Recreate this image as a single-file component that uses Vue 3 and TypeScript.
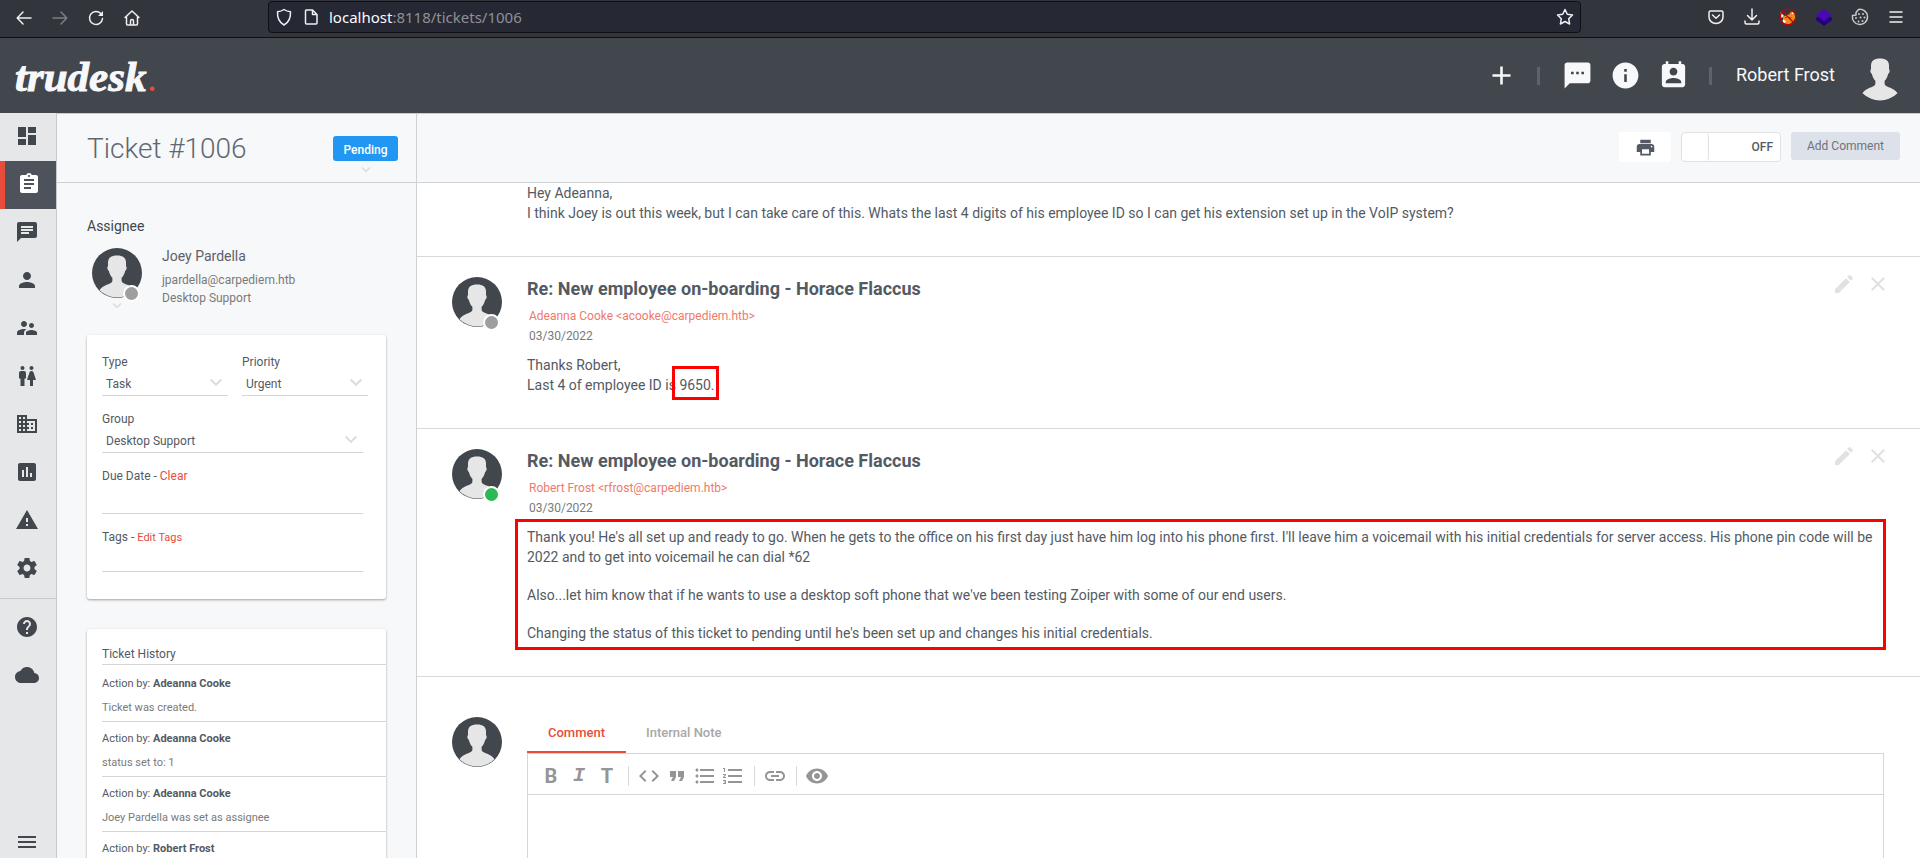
<script setup lang="ts">
import { h, ref } from 'vue'

const icons: Record<string, string> = {
  dashboard: 'M3 13h8V3H3v10zm0 8h8v-6H3v6zm10 0h8V11h-8v10zm0-18v6h8V3h-8z',
  assignment: 'M19 3h-4.18C14.4 1.84 13.3 1 12 1c-1.3 0-2.4.84-2.82 2H5c-1.1 0-2 .9-2 2v14c0 1.1.9 2 2 2h14c1.1 0 2-.9 2-2V5c0-1.1-.9-2-2-2zm-7 0c.55 0 1 .45 1 1s-.45 1-1 1-1-.45-1-1 .45-1 1-1zm2 14H7v-2h7v2zm3-4H7v-2h10v2zm0-4H7V7h10v2z',
  chat: 'M20 2H4c-1.1 0-1.99.9-1.99 2L2 22l4-4h14c1.1 0 2-.9 2-2V4c0-1.1-.9-2-2-2zM6 9h12v2H6V9zm8 5H6v-2h8v2zm4-6H6V6h12v2z',
  person: 'M12 12c2.21 0 4-1.79 4-4s-1.79-4-4-4-4 1.79-4 4 1.79 4 4 4zm0 2c-2.67 0-8 1.34-8 4v2h16v-2c0-2.66-5.33-4-8-4z',
  group: 'M16.5 12c1.38 0 2.49-1.12 2.49-2.5S17.88 7 16.5 7C15.12 7 14 8.12 14 9.5s1.12 2.5 2.5 2.5zM9 11c1.66 0 2.99-1.34 2.99-3S10.66 5 9 5C7.34 5 6 6.34 6 8s1.34 3 3 3zm7.5 3c-1.83 0-5.5.92-5.5 2.75V19h11v-2.25c0-1.83-3.67-2.75-5.5-2.75zM9 13c-2.33 0-7 1.17-7 3.5V19h7v-2.25c0-.85.33-2.34 2.37-3.47C10.5 13.1 9.66 13 9 13z',
  wc: 'M5.5 22v-7.5H4V9c0-1.1.9-2 2-2h3c1.1 0 2 .9 2 2v5.5H9.5V22h-4zM18 22v-6h3l-2.54-7.63C18.18 7.55 17.42 7 16.56 7h-.12c-.86 0-1.63.55-1.9 1.37L12 16h3v6h3zM7.5 6c1.11 0 2-.89 2-2s-.89-2-2-2-2 .89-2 2 .89 2 2 2zm9 0c1.11 0 2-.89 2-2s-.89-2-2-2-2 .89-2 2 .89 2 2 2z',
  domain: 'M12 7V3H2v18h20V7H12zM6 19H4v-2h2v2zm0-4H4v-2h2v2zm0-4H4V9h2v2zm0-4H4V5h2v2zm4 12H8v-2h2v2zm0-4H8v-2h2v2zm0-4H8V9h2v2zm0-4H8V5h2v2zm10 12h-8v-2h2v-2h-2v-2h2v-2h-2V9h8v10zm-2-8h-2v2h2v-2zm0 4h-2v2h2v-2z',
  assessment: 'M19 3H5c-1.1 0-2 .9-2 2v14c0 1.1.9 2 2 2h14c1.1 0 2-.9 2-2V5c0-1.1-.9-2-2-2zM9 17H7v-7h2v7zm4 0h-2V7h2v10zm4 0h-2v-4h2v4z',
  warning: 'M1 21h22L12 2 1 21zm12-3h-2v-2h2v2zm0-4h-2v-4h2v4z',
  settings: 'M19.43 12.98c.04-.32.07-.64.07-.98s-.03-.66-.07-.98l2.11-1.65c.19-.15.24-.42.12-.64l-2-3.46c-.12-.22-.39-.3-.61-.22l-2.49 1c-.52-.4-1.08-.73-1.69-.98l-.38-2.65C14.46 2.18 14.25 2 14 2h-4c-.25 0-.46.18-.49.42l-.38 2.65c-.61.25-1.17.59-1.69.98l-2.49-1c-.23-.09-.49 0-.61.22l-2 3.46c-.13.22-.07.49.12.64l2.11 1.65c-.04.32-.07.65-.07.98s.03.66.07.98l-2.11 1.65c-.19.15-.24.42-.12.64l2 3.46c.12.22.39.3.61.22l2.49-1c.52.4 1.08.73 1.69.98l.38 2.65c.03.24.24.42.49.42h4c.25 0 .46-.18.49-.42l.38-2.65c.61-.25 1.17-.59 1.69-.98l2.49 1c.23.09.49 0 .61-.22l2-3.46c.12-.22.07-.49-.12-.64l-2.11-1.65zM12 15.5c-1.93 0-3.5-1.57-3.5-3.5s1.57-3.5 3.5-3.5 3.5 1.57 3.5 3.5-1.57 3.5-3.5 3.5z',
  help: 'M12 2C6.48 2 2 6.48 2 12s4.48 10 10 10 10-4.48 10-10S17.52 2 12 2zm1 17h-2v-2h2v2zm2.07-7.75l-.9.92C13.45 12.9 13 13.5 13 15h-2v-.5c0-1.1.45-2.1 1.17-2.83l1.24-1.26c.37-.36.59-.86.59-1.41 0-1.1-.9-2-2-2s-2 .9-2 2H8c0-2.21 1.79-4 4-4s4 1.79 4 4c0 .88-.36 1.68-.93 2.25z',
  cloud: 'M19.35 10.04C18.67 6.59 15.64 4 12 4 9.11 4 6.6 5.64 5.35 8.04 2.34 8.36 0 10.91 0 14c0 3.31 2.69 6 6 6h13c2.76 0 5-2.24 5-5 0-2.64-2.05-4.78-4.65-4.96z',
  menu: 'M3 18h18v-2H3v2zm0-5h18v-2H3v2zm0-7v2h18V6H3z',
  add: 'M19 13h-6v6h-2v-6H5v-2h6V5h2v6h6v2z',
  sms: 'M20 2H4c-1.1 0-1.99.9-1.99 2L2 22l4-4h14c1.1 0 2-.9 2-2V4c0-1.1-.9-2-2-2zM9 11H7V9h2v2zm4 0h-2V9h2v2zm4 0h-2V9h2v2z',
  info: 'M12 2C6.48 2 2 6.48 2 12s4.48 10 10 10 10-4.48 10-10S17.52 2 12 2zm1 15h-2v-6h2v6zm0-8h-2V7h2v2z',
  contact: 'M19 3h-1V1h-2v2H8V1H6v2H5c-1.11 0-2 .9-2 2v14c0 1.1.89 2 2 2h14c1.1 0 2-.9 2-2V5c0-1.1-.9-2-2-2zm-7 3c1.66 0 3 1.34 3 3s-1.34 3-3 3-3-1.34-3-3 1.34-3 3-3zm6 12H6v-1c0-2 4-3.1 6-3.1s6 1.1 6 3.1v1z',
  print: 'M19 8H5c-1.66 0-3 1.34-3 3v6h4v4h12v-4h4v-6c0-1.66-1.34-3-3-3zm-3 11H8v-5h8v5zm3-7c-.55 0-1-.45-1-1s.45-1 1-1 1 .45 1 1-.45 1-1 1zm-1-9H6v4h12V3z',
  edit: 'M3 17.25V21h3.75L17.81 9.94l-3.75-3.75L3 17.25zM20.71 7.04c.39-.39.39-1.02 0-1.41l-2.34-2.34c-.39-.39-1.02-.39-1.41 0l-1.83 1.83 3.75 3.75 1.83-1.83z',
  close: 'M19 6.41L17.59 5 12 10.59 6.41 5 5 6.41 10.59 12 5 17.59 6.41 19 12 13.41 17.59 19 19 17.59 13.41 12z',
  code: 'M9.4 16.6L4.8 12l4.6-4.6L8 6l-6 6 6 6 1.4-1.4zm5.2 0l4.6-4.6-4.6-4.6L16 6l6 6-6 6-1.4-1.4z',
  quote: 'M6 17h3l2-4V7H5v6h3zm8 0h3l2-4V7h-6v6h3z',
  bullets: 'M4 10.5c-.83 0-1.5.67-1.5 1.5s.67 1.5 1.5 1.5 1.5-.67 1.5-1.5-.67-1.5-1.5-1.5zm0-6c-.83 0-1.5.67-1.5 1.5S3.17 7.5 4 7.5 5.5 6.83 5.5 6 4.83 4.5 4 4.5zm0 12c-.83 0-1.5.68-1.5 1.5s.68 1.5 1.5 1.5 1.5-.68 1.5-1.5-.67-1.5-1.5-1.5zM7 19h14v-2H7v2zm0-6h14v-2H7v2zm0-8v2h14V5H7z',
  numbers: 'M2 17h2v.5H3v1h1v.5H2v1h3v-4H2v1zm1-9h1V4H2v1h1v3zm-1 3h1.8L2 13.1v.9h3v-1H3.2L5 10.9V10H2v1zm5-6v2h14V5H7zm0 14h14v-2H7v2zm0-6h14v-2H7v2z',
  link: 'M3.9 12c0-1.71 1.39-3.1 3.1-3.1h4V7H7c-2.76 0-5 2.24-5 5s2.24 5 5 5h4v-1.9H7c-1.71 0-3.1-1.39-3.1-3.1zM8 13h8v-2H8v2zm9-6h-4v1.9h4c1.71 0 3.1 1.39 3.1 3.1s-1.39 3.1-3.1 3.1h-4V17h4c2.76 0 5-2.24 5-5s-2.24-5-5-5z',
  eye: 'M12 4.5C7 4.5 2.73 7.61 1 12c1.73 4.39 6 7.5 11 7.5s9.27-3.11 11-7.5c-1.73-4.39-6-7.5-11-7.5zM12 17c-2.76 0-5-2.24-5-5s2.24-5 5-5 5 2.24 5 5-2.24 5-5 5zm0-8c-1.66 0-3 1.34-3 3s1.34 3 3 3 3-1.34 3-3-1.34-3-3-3z',
  chevron: 'M7.41 7.84L12 12.42l4.59-4.58L18 9.25l-6 6-6-6z'
}

const Icon = (props: { name: string; size?: number }) =>
  h(
    'svg',
    { viewBox: '0 0 24 24', width: props.size ?? 24, height: props.size ?? 24, fill: 'currentColor', 'aria-hidden': 'true' },
    [h('path', { d: icons[props.name] })]
  )
Icon.props = ['name', 'size']

const Avatar = () =>
  h('svg', { viewBox: '0 0 50 50', width: 50, height: 50, 'aria-hidden': 'true' }, [
    h('circle', { cx: 25, cy: 25, r: 25, fill: '#42464d' }),
    h('path', {
      fill: '#e6e6e6',
      d: 'M25 7.5c-6 0-9 2.500-9 7v3.800c-.9.400-.8 2.500-.1 3.700.3.500.8.600 1 1.100.6 2.700 1.700 5.200 3.500 6.700v2.700c0 1.600-1 2.200-2.600 2.900-4.200 1.800-8.200 3.100-10.300 6.900A25 25 0 0 0 42.500 42.300c-2.100-3.800-6.100-5.100-10.300-6.900-1.600-.7-2.600-1.300-2.600-2.900v-2.700c1.800-1.500 2.900-4 3.500-6.700.2-.5.7-.6 1-1.100.7-1.200.8-3.300-.1-3.700V14.500c0-4.500-3-7-9-7z'
    })
  ])

const nav = [
  { icon: 'dashboard', label: 'Dashboard' },
  { icon: 'assignment', label: 'Tickets', active: true },
  { icon: 'chat', label: 'Messages' },
  { icon: 'person', label: 'Accounts' },
  { icon: 'group', label: 'Groups' },
  { icon: 'wc', label: 'Teams' },
  { icon: 'domain', label: 'Departments' },
  { icon: 'assessment', label: 'Reports' },
  { icon: 'warning', label: 'Notices' },
  { icon: 'settings', label: 'Settings' }
]
const navExtra = [
  { icon: 'help', label: 'Help' },
  { icon: 'cloud', label: 'Cloud' }
]

const history: { by: string; text?: string }[] = [
  { by: 'Adeanna Cooke', text: 'Ticket was created.' },
  { by: 'Adeanna Cooke', text: 'status set to: 1' },
  { by: 'Adeanna Cooke', text: 'Joey Pardella was set as assignee' },
  { by: 'Robert Frost' }
]

interface Comment {
  author: string
  online: boolean
  boxed: boolean
  paragraphs: { lines: string[]; mark?: string }[]
}
const subject = 'Re: New employee on-boarding - Horace Flaccus'
const comments: Comment[] = [
  {
    author: 'Adeanna Cooke <acooke@carpediem.htb>',
    online: false,
    boxed: false,
    paragraphs: [{ lines: ['Thanks Robert,', 'Last 4 of employee ID is '], mark: '9650.' }]
  },
  {
    author: 'Robert Frost <rfrost@carpediem.htb>',
    online: true,
    boxed: true,
    paragraphs: [
      { lines: ["Thank you! He's all set up and ready to go. When he gets to the office on his first day just have him log into his phone first. I'll leave him a voicemail with his initial credentials for server access. His phone pin code will be 2022 and to get into voicemail he can dial *62"] },
      { lines: ["Also...let him know that if he wants to use a desktop soft phone that we've been testing Zoiper with some of our end users."] },
      { lines: ["Changing the status of this ticket to pending until he's been set up and changes his initial credentials."] }
    ]
  }
]

const tools = [
  [{ icon: 'code', label: 'Code' }, { icon: 'quote', label: 'Quote' }, { icon: 'bullets', label: 'Bulleted list' }, { icon: 'numbers', label: 'Numbered list' }],
  [{ icon: 'link', label: 'Link' }],
  [{ icon: 'eye', label: 'Preview' }]
]

const type = ref('Task')
const priority = ref('Urgent')
const group = ref('Desktop Support')
const dueDate = ref('')
const tags = ref('')
const reply = ref('')
const enabled = ref(false)
</script>

<template>
  <div class="screen">
    <div class="browser">
      <div class="browser-nav">
        <button type="button" aria-label="Back"><svg viewBox="0 0 18 18" class="line"><path d="M16 9H2.500M8 3L2.200 9l5.800 6" /></svg></button>
        <button type="button" aria-label="Forward" class="dim"><svg viewBox="0 0 18 18" class="line"><path d="M2 9h13.500M10 3l5.800 6-5.800 6" /></svg></button>
        <button type="button" aria-label="Reload"><svg viewBox="0 0 18 18" class="line"><path d="M15.500 9.500A6.500 6.500 0 1 1 13.800 4.600L15 6" /><path d="M16 2v5h-5z" class="solid" /></svg></button>
        <button type="button" aria-label="Home"><svg viewBox="0 0 18 18" class="line"><path d="M2 8.500L9 2l7 6.500M3.500 7.500V15a1 1 0 0 0 1 1h9a1 1 0 0 0 1-1V7.500M7.500 16v-4a1.500 1.500 0 0 1 3 0v4" /></svg></button>
      </div>
      <div class="address">
        <svg viewBox="0 0 18 18" class="line"><path d="M9 1.500c2 1.500 4 2 6.500 2.200C15.800 9.500 14.500 14 9 17 3.500 14 2.200 9.500 2.500 3.700 5 3.500 7 3 9 1.500z" /></svg>
        <svg viewBox="0 0 18 18" class="line"><path d="M4 2h6.500L15 6.500V15a1 1 0 0 1-1 1H4.500a1 1 0 0 1-1-1V3a1 1 0 0 1 1-1zM10.500 2v4.500H15" /></svg>
        <span class="url"><b>localhost</b>:8118/tickets/1006</span>
        <svg viewBox="0 0 18 18" class="line"><path d="M9 1.500l2.300 4.800 5.200.7-3.800 3.700.9 5.300L9 13.500 4.400 16l.9-5.300L1.500 7l5.200-.7z" /></svg>
      </div>
      <div class="browser-tools">
        <svg viewBox="0 0 18 18" class="line"><path d="M3.500 3h11A1.500 1.500 0 0 1 16 4.500V9a7 6.500 0 0 1-14 0V4.500A1.500 1.500 0 0 1 3.500 3zM5.500 7L9 10.200 12.500 7" /></svg>
        <svg viewBox="0 0 18 18" class="line"><path d="M9 1v10.500M4.500 7.500L9 12l4.500-4.500M2 13v1.500A1.500 1.500 0 0 0 3.500 16h11a1.500 1.500 0 0 0 1.500-1.500V13" /></svg>
        <svg viewBox="0 0 18 18">
          <path d="M4 9l3-2 3-.5 2-3 2 1 2 1v5l-2 3-3 2.500-4 .5-3-2z" fill="#ee8b1d" />
          <path d="M1.500 4l3.500 4-2.500 2zM4 11.500l3 1.500-1.500 2.500L3.500 14zM13 4l2 1-1.500 1.500z" fill="#fff" />
          <path d="M10 9l3 .5-2 2zM6 9h2v1H6z" fill="#a04f08" />
          <circle cx="9" cy="9" r="7.800" fill="none" stroke="#c40000" stroke-width="1.200" />
          <path d="M3.500 3.500l11 11" stroke="#c40000" stroke-width="1.200" />
        </svg>
        <svg viewBox="0 0 18 18"><path d="M1 10l8-5 8 5v2l-8 6-8-6z" fill="#250080" /><path d="M9 1l8 6-8 6-8-6z" fill="#4b08b5" /></svg>
        <svg viewBox="0 0 18 18" class="cookie">
          <path d="M7.500 1.500a7.600 7.600 0 1 1-6 6L5 7V4.500z" />
          <circle cx="8" cy="6" r="1" class="dots" /><circle cx="12" cy="6" r="1" class="dots" />
          <circle cx="5" cy="10" r="1" class="dots" /><circle cx="9.500" cy="9.500" r="1" class="dots" />
          <circle cx="13.500" cy="9.500" r="1" class="dots" /><circle cx="7.500" cy="13.500" r="1" class="dots" />
          <circle cx="11.500" cy="13" r="1" class="dots" />
        </svg>
        <svg viewBox="0 0 18 18" class="line"><path d="M3 4h12M3 9h12M3 14h12" /></svg>
      </div>
    </div>

    <header class="topbar">
      <a href="#" class="logo">trudesk<span>.</span></a>
      <div class="top-actions">
        <button type="button" aria-label="New ticket"><Icon name="add" :size="31" /></button>
        <i class="bar"></i>
        <button type="button" aria-label="Conversations" class="chat"><Icon name="sms" :size="31" /></button>
        <button type="button" aria-label="Notices"><Icon name="info" :size="31" /></button>
        <button type="button" aria-label="Online users"><Icon name="contact" :size="31" /></button>
        <i class="bar"></i>
        <span class="user">Robert Frost</span>
        <Avatar />
      </div>
    </header>

    <div class="body">
      <nav class="sidebar">
        <a v-for="n in nav" :key="n.icon" href="#" :aria-label="n.label" :class="{ active: n.active }"><Icon :name="n.icon" /></a>
        <hr />
        <a v-for="n in navExtra" :key="n.icon" href="#" :aria-label="n.label"><Icon :name="n.icon" /></a>
        <button type="button" aria-label="Expand menu" class="expand"><Icon name="menu" /></button>
      </nav>

      <aside class="panel">
        <div class="panel-head">
          <h1>Ticket #1006</h1>
          <button type="button" class="status">Pending<Icon name="chevron" :size="18" class="drop" /></button>
        </div>
        <div class="panel-body">
          <h2>Assignee</h2>
          <div class="assignee">
            <button type="button" class="pic" aria-label="Change assignee"><Avatar /><i class="dot"></i><Icon name="chevron" :size="18" class="drop" /></button>
            <div>
              <strong>Joey Pardella</strong>
              <span>jpardella@carpediem.htb</span>
              <span>Desktop Support</span>
            </div>
          </div>

          <section class="card details">
            <div class="pair">
              <div class="field">
                <label for="type">Type</label>
                <div class="select"><select id="type" v-model="type"><option>Task</option><option>Issue</option></select><Icon name="chevron" /></div>
              </div>
              <div class="field">
                <label for="priority">Priority</label>
                <div class="select"><select id="priority" v-model="priority"><option>Urgent</option><option>Normal</option></select><Icon name="chevron" /></div>
              </div>
            </div>
            <div class="field wide">
              <label for="group">Group</label>
              <div class="select"><select id="group" v-model="group"><option>Desktop Support</option></select><Icon name="chevron" /></div>
            </div>
            <div class="field wide">
              <div><label for="due">Due Date</label> - <a href="#">Clear</a></div>
              <input id="due" v-model="dueDate" type="text" />
            </div>
            <div class="field wide">
              <div><label for="tags">Tags</label> - <a href="#" class="small">Edit Tags</a></div>
              <input id="tags" v-model="tags" type="text" class="tags" />
            </div>
          </section>

          <section class="card history">
            <h3>Ticket History</h3>
            <div v-for="(e, i) in history" :key="i" class="event">
              <p>Action by: <b>{{ e.by }}</b></p>
              <p v-if="e.text" class="what">{{ e.text }}</p>
            </div>
          </section>
        </div>
      </aside>

      <main class="main">
        <div class="main-head">
          <button type="button" class="print" aria-label="Print"><Icon name="print" :size="21" /></button>
          <label class="toggle"><input v-model="enabled" type="checkbox" role="switch" /><i></i><span>OFF</span></label>
          <button type="button" class="add">Add Comment</button>
        </div>

        <div class="thread">
          <article class="comment first">
            <div class="message">
              <p>Hey Adeanna,<br />I think Joey is out this week, but I can take care of this. Whats the last 4 digits of his employee ID so I can get his extension set up in the VoIP system?</p>
            </div>
          </article>

          <article v-for="c in comments" :key="c.author" class="comment">
            <div class="pic"><Avatar /><i class="dot" :class="{ online: c.online }"></i></div>
            <div class="content">
              <h2>{{ subject }}</h2>
              <a href="#" class="author">{{ c.author }}</a>
              <time datetime="2022-03-30">03/30/2022</time>
              <div class="message" :class="{ boxed: c.boxed }">
                <p v-for="(p, i) in c.paragraphs" :key="i">
                  <template v-for="(l, j) in p.lines" :key="j"><br v-if="j" />{{ l }}</template><mark v-if="p.mark">{{ p.mark }}</mark>
                </p>
              </div>
            </div>
            <div class="actions">
              <button type="button" aria-label="Edit comment"><Icon name="edit" /></button>
              <button type="button" aria-label="Delete comment"><Icon name="close" /></button>
            </div>
          </article>

          <section class="reply">
            <Avatar />
            <div class="composer">
              <div class="tabs" role="tablist">
                <button type="button" role="tab" aria-selected="true" class="current">Comment</button>
                <button type="button" role="tab" aria-selected="false">Internal Note</button>
              </div>
              <div class="editor">
                <div class="toolbar">
                  <button type="button" class="glyph" aria-label="Bold">B</button>
                  <button type="button" class="glyph slant" aria-label="Italic">I</button>
                  <button type="button" class="glyph" aria-label="Heading">T</button>
                  <template v-for="(set, i) in tools" :key="i">
                    <i class="sep"></i>
                    <button v-for="t in set" :key="t.icon" type="button" :aria-label="t.label"><Icon :name="t.icon" /></button>
                  </template>
                </div>
                <textarea v-model="reply" aria-label="Comment"></textarea>
              </div>
            </div>
          </section>
        </div>
      </main>
    </div>
  </div>
</template>

<style>
body {
  margin: 0;
  overflow: hidden;
}
</style>

<style scoped>
.screen {
  display: flex;
  flex-direction: column;
  height: 100vh;
  overflow: hidden;
  font-family: Roboto, 'Liberation Sans', sans-serif;
  font-size: 14px;
  line-height: 20px;
  color: #545a63;
  background: #fff;
}
.screen * {
  box-sizing: border-box;
}
button {
  padding: 0;
  border: 0;
  background: none;
  font: inherit;
  color: inherit;
}
a {
  color: #e74c3c;
  text-decoration: none;
}
h1,
h2,
h3,
p {
  margin: 0;
  font-weight: 400;
}
svg {
  display: block;
  flex: none;
}

.browser {
  display: flex;
  flex: none;
  align-items: flex-start;
  height: 38px;
  background: #33353c;
  border-bottom: 1px solid #0e0f12;
  color: #f0f0f3;
}
.browser svg {
  width: 18px;
  height: 18px;
}
.line,
.cookie {
  fill: none;
  stroke: currentColor;
  stroke-width: 1.500;
  stroke-linecap: round;
  stroke-linejoin: round;
}
.cookie {
  color: #c9cacd;
}
.solid,
.dots {
  fill: currentColor;
  stroke: none;
}
.dim {
  color: #7d7e83;
}
.browser-nav {
  display: flex;
  gap: 18px;
  padding: 9px 127px 0 15px;
}
.address {
  display: flex;
  flex: 1;
  align-items: center;
  gap: 9px;
  height: 32px;
  margin-top: 1px;
  padding: 0 6px;
  border: 1px solid #0f1015;
  border-radius: 4px;
  background: #262833;
}
.url {
  flex: 1;
  font-family: 'Noto Sans', sans-serif;
  font-size: 15px;
  color: #8f9096;
}
.url b {
  font-weight: 400;
  color: #fbfbfe;
}
.browser-tools {
  display: flex;
  gap: 18px;
  padding: 8px 15px 0 126px;
}

.topbar {
  display: flex;
  flex: none;
  align-items: center;
  justify-content: space-between;
  height: 75px;
  padding: 0 15px;
  background: #42464d;
  color: #f7f8fa;
}
.logo {
  padding-top: 8px;
  font: italic 700 43px/48px 'Liberation Serif', serif;
  color: #f7f8fa;
  -webkit-text-stroke: 1px currentColor;
}
.logo span {
  margin-left: 3px;
  font-size: 28px;
  color: #e74c3c;
  -webkit-text-stroke: 0;
}
.top-actions {
  display: flex;
  align-items: center;
}
.top-actions button {
  width: 48px;
  display: flex;
  justify-content: center;
}
.top-actions .chat {
  margin-left: 13px;
}
.bar {
  width: 3px;
  height: 18px;
  margin-left: 12px;
  background: #5d636e;
}
.top-actions .bar + .user {
  margin-left: 24px;
}
.user {
  margin-right: 20px;
  padding-bottom: 2px;
  font-size: 18px;
}

.body {
  display: flex;
  flex: 1;
  min-height: 0;
}
.sidebar {
  display: flex;
  flex: none;
  flex-direction: column;
  width: 57px;
  border-right: 1px solid #c9cacd;
  background: #e6e7e9;
  color: #42464d;
}
.sidebar a,
.expand {
  display: flex;
  flex: none;
  align-items: center;
  height: 48px;
  padding: 0 0 2px 15px;
  color: #42464d;
}
.sidebar .active {
  padding-left: 12px;
  border-left: 5px solid #e74c3c;
  background: #4d525b;
  color: #fff;
}
.sidebar hr {
  width: 100%;
  margin: 5px 0;
  border: 0;
  border-top: 1px solid #c9cacd;
}
.sidebar .expand {
  height: 30px;
  margin-top: auto;
}

.panel {
  display: flex;
  flex: none;
  flex-direction: column;
  width: 360px;
  border-top: 1px solid #c9cacd;
  border-right: 1px solid #d0d1d4;
  background: #f7f8fa;
}
.panel-head {
  display: flex;
  flex: none;
  align-items: flex-start;
  justify-content: space-between;
  height: 69px;
  padding: 17px 18px 0 30px;
  border-bottom: 1px solid #d0d1d4;
}
.panel-head h1 {
  font-size: 28px;
  font-weight: 300;
  line-height: 36px;
  color: #62676f;
}
.status {
  position: relative;
  width: 65px;
  height: 25px;
  margin-top: 5px;
  padding-top: 2px;
  border-radius: 3px;
  background: #2196f3;
  font-size: 12px;
  font-weight: 500;
  color: #fff;
}
.drop {
  position: absolute;
  top: 25px;
  left: 50%;
  margin-left: -9px;
  color: #d9dde4;
}
.panel-body {
  flex: 1;
  min-height: 0;
  padding: 33px 30px 0;
  overflow: hidden;
}
.panel-body h2 {
  font-size: 14px;
  color: #42464d;
}
.assignee {
  display: flex;
  gap: 20px;
  height: 89px;
  margin-top: 10px;
  padding-left: 5px;
  font-size: 12px;
  line-height: 18px;
  color: #7a7a7a;
}
.assignee strong,
.assignee span {
  display: block;
}
.assignee strong {
  margin-bottom: 5px;
  font-size: 14px;
  font-weight: 400;
  line-height: 20px;
  color: #5c616a;
}
.pic {
  position: relative;
  flex: none;
  width: 50px;
  height: 50px;
}
.assignee .pic {
  margin-top: 2px;
}
.pic .drop {
  top: 49px;
}
.dot {
  position: absolute;
  right: 2px;
  bottom: -4px;
  width: 17px;
  height: 17px;
  border: 2px solid #fff;
  border-radius: 50%;
  background: #9e9e9e;
}
.dot.online {
  background: #2bb956;
}
.card {
  border-radius: 3px;
  background: #fff;
  box-shadow: 0 1px 3px rgba(0, 0, 0, 0.2), 0 1px 2px rgba(0, 0, 0, 0.18);
}
.details {
  display: flex;
  flex-direction: column;
  gap: 14px;
  padding: 18px 18px 27px 15px;
  font-size: 12px;
  line-height: 18px;
}
.pair {
  display: grid;
  grid-template-columns: 1fr 1fr;
  gap: 14px;
}
.field label {
  display: inline-block;
}
.field.wide {
  margin-right: 5px;
}
.small {
  font-size: 11px;
}
.select {
  position: relative;
  height: 25px;
  border-bottom: 1px solid #d6d6d6;
}
.select select {
  width: 100%;
  height: 24px;
  padding: 2px 4px 0;
  border: 0;
  appearance: none;
  background: none;
  font: inherit;
  color: inherit;
}
.select svg {
  position: absolute;
  top: 0;
  right: 0;
  color: #dcdcdc;
  pointer-events: none;
}
.field input {
  display: block;
  width: 100%;
  height: 29px;
  padding: 0 4px;
  border: 0;
  border-bottom: 1px solid #d6d6d6;
  background: none;
  font: inherit;
}
.field .tags {
  height: 25px;
}
.history {
  margin-top: 30px;
  padding: 16px 0 0 15px;
  font-size: 11px;
  line-height: 18px;
}
.history h3 {
  margin-bottom: 2px;
  padding-bottom: 1px;
  border-bottom: 1px solid #d6d6d6;
  font-size: 12px;
}
.event {
  height: 55px;
  padding-top: 8px;
  border-bottom: 1px solid #d6d6d6;
}
.what {
  margin-top: 6px;
  color: #7a7a7a;
}

.main {
  display: flex;
  flex: 1;
  flex-direction: column;
  min-width: 0;
  border-top: 1px solid #c9cacd;
}
.main-head {
  display: flex;
  flex: none;
  gap: 10px;
  justify-content: flex-end;
  height: 69px;
  padding: 18px 20px 0;
  border-bottom: 1px solid #d0d1d4;
  background: #f7f8fa;
  font-size: 12px;
}
.print {
  display: flex;
  align-items: center;
  justify-content: center;
  width: 52px;
  height: 30px;
  border-radius: 3px;
  background: #fff;
}
.toggle {
  display: flex;
  align-items: center;
  justify-content: space-between;
  width: 100px;
  height: 30px;
  padding-right: 7px;
  border: 1px solid #e0e1e3;
  border-radius: 4px;
  background: #fff;
  font-weight: 500;
}
.toggle input {
  position: absolute;
  opacity: 0;
}
.toggle i {
  width: 27px;
  height: 28px;
  border-right: 1px solid #e0e1e3;
  border-radius: 4px;
}
.add {
  width: 109px;
  height: 28px;
  border-radius: 3px;
  background: #dde1e9;
  color: #6d727b;
}
.thread {
  flex: 1;
  min-height: 0;
  overflow: hidden;
}
.comment {
  display: flex;
  gap: 25px;
  padding: 20px 30px 33px 35px;
  border-top: 1px solid #d9d9d9;
}
.comment.first {
  padding: 0 36px 33px 110px;
  border-top: 0;
}
.content {
  flex: 1;
  min-width: 0;
  margin-right: -77px;
}
.content h2 {
  margin-bottom: 5px;
  font-size: 18px;
  font-weight: 700;
  line-height: 24px;
}
.author,
.content time {
  display: block;
  padding-left: 2px;
  font-size: 12px;
}
.author {
  width: max-content;
  color: #ee7a6d;
}
.content time {
  color: #7a7a7a;
}
.content .message {
  position: relative;
  margin-top: 9px;
}
.message p + p {
  margin-top: 18px;
}
mark {
  position: relative;
  background: none;
  color: inherit;
}
mark::after {
  position: absolute;
  inset: -11px -4px -7px -7px;
  border: 3px solid #f00;
  content: '';
}
.boxed::after {
  position: absolute;
  inset: -8px -2px -7px -12px;
  border: 3px solid #f00;
  content: '';
}
.actions {
  display: flex;
  gap: 10px;
  height: 24px;
  margin-top: -5px;
  color: #e0e1e3;
}
.actions button {
  height: 24px;
}
.reply {
  display: flex;
  gap: 25px;
  padding: 40px 36px 0 35px;
  border-top: 1px solid #d9d9d9;
}
.composer {
  flex: 1;
}
.tabs {
  display: flex;
  height: 36px;
  font-size: 13px;
  font-weight: 500;
  color: #a8a8a8;
}
.tabs button {
  padding: 0 20px 3px;
  border-bottom: 2px solid transparent;
}
.tabs .current {
  padding: 0 21px 3px;
  border-color: #e74c3c;
  color: #e74c3c;
}
.editor {
  border: 1px solid #d6d6d6;
}
.toolbar {
  display: flex;
  align-items: center;
  height: 41px;
  padding: 4px 9px 0;
  border-bottom: 1px solid #d6d6d6;
  color: #959595;
}
.toolbar button {
  display: flex;
  justify-content: center;
  width: 28px;
}
.toolbar .glyph {
  font-size: 20px;
  font-weight: 700;
}
.toolbar .slant {
  font-family: 'Liberation Mono', monospace;
  font-style: italic;
}
.sep {
  width: 1px;
  height: 20px;
  margin: 0 6px 0 7px;
  background: #d9d9d9;
}
textarea {
  display: block;
  width: 100%;
  height: 200px;
  border: 0;
  outline: 0;
  resize: none;
  background: none;
  font: inherit;
}
</style>
